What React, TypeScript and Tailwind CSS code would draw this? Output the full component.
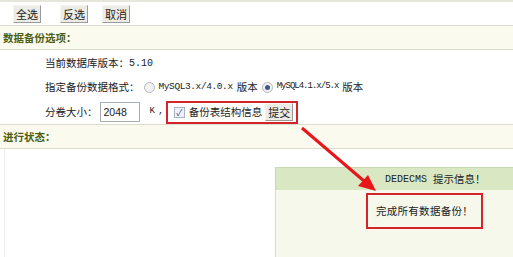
const FONT = { fontFamily: '"SimSun", "Noto Sans CJK SC", sans-serif' };
const MONO = { fontFamily: '"Liberation Mono", "Noto Sans CJK SC", monospace' };

function OldButton({ label }: { label: string }) {
  return (
    <button className="h-[18px] w-[28px] text-[11px] leading-[16px] text-[#222] bg-[#ecebe4] border border-t-[#f5f5f5] border-l-[#f5f5f5] border-r-[#9a9a9a] border-b-[#9a9a9a] whitespace-nowrap">
      {label}
    </button>
  );
}

function Radio({ checked }: { checked?: boolean }) {
  return (
    <span className="inline-flex w-[11px] h-[11px] rounded-full border border-[#b8b8b8] bg-[#f1f1f1] items-center justify-center">
      {checked && <span className="w-[5px] h-[5px] rounded-full bg-[#3d5a86]" />}
    </span>
  );
}

function SectionHeader({ title }: { title: string }) {
  return (
    <div className="h-[25px] bg-[#fafaef] border-y border-[#dcdccf] flex items-center pl-[3px]">
      <span className="text-[10.5px] font-bold text-[#4b5e12]">{title}</span>
    </div>
  );
}

export default function App() {
  return (
    <div className="relative w-[513px] h-[257px] overflow-hidden bg-white text-[10.5px] text-[#222] whitespace-nowrap" style={FONT}>
      {/* toolbar */}
      <div className="h-[25px] border-t-2 border-[#e6e6da] flex items-center pl-[13px]">
        <OldButton label="全选" />
        <span className="ml-[19px]"><OldButton label="反选" /></span>
        <span className="ml-[14px]"><OldButton label="取消" /></span>
      </div>

      <SectionHeader title="数据备份选项：" />

      <div className="pl-[45px]">
        <div className="h-[24px] flex items-center pt-[2px]">
          <span>当前数据库版本：</span>
          <span style={MONO} className="text-[10px]">5.10</span>
        </div>
        <div className="h-[26px] flex items-center">
          <span>指定备份数据格式：</span>
          <span className="ml-[4px] flex items-center">
            <Radio />
            <span style={MONO} className="ml-[4px] text-[9.5px] tracking-[-0.4px]">MySQL3.x/4.0.x</span>
            <span className="ml-[4px]">版本</span>
          </span>
          <span className="ml-[4px] flex items-center">
            <Radio checked />
            <span style={MONO} className="ml-[4px] text-[9px] tracking-[-1px]">MySQL4.1.x/5.x</span>
            <span className="ml-[4px]">版本</span>
          </span>
        </div>
        <div className="h-[24px] flex items-center">
          <span>分卷大小：</span>
          <input
            readOnly
            value="2048"
            className="ml-[2px] w-[40px] h-[20px] border border-[#a5acb2] px-[3px] text-[10.5px] outline-none"
            style={{ fontFamily: '"Liberation Sans", sans-serif' }}
          />
          <span className="ml-[10px] text-[9px] tracking-[-1px]" style={MONO}>K ,</span>
          <span className="ml-[3px] h-[23px] w-[132px] border-2 border-[#d3232b] flex items-center pl-[6px]">
            <span className="w-[11px] h-[11px] border border-[#a9b4c2] bg-[#eef2f7] flex items-center justify-center text-[9px] leading-none text-[#3a5b9c]">✓</span>
            <span className="ml-[4px]">备份表结构信息</span>
            <span className="ml-[3px] flex"><OldButton label="提交" /></span>
          </span>
        </div>
      </div>

      <SectionHeader title="进行状态：" />

      <div className="flex h-[110px]">
        <div className="w-[5px] border-r border-[#eeeeee]" />
        <div className="ml-[270px] mt-[18px] flex-1 flex flex-col">
          <div className="h-[23px] bg-[#d9e8c3] border-t border-l border-[#c9d9b3] flex items-center pl-[109px]">
            <span style={MONO} className="text-[10px]">DEDECMS</span>
            <span className="ml-[6px]">提示信息！</span>
          </div>
          <div className="flex-1 bg-[#f6f8ec] border-l border-[#d8dccb] pl-[90px] pt-[3px]">
            <div className="w-[117px] h-[36px] border-2 border-[#d3232b] flex items-center justify-center tracking-[0.3px]">
              完成所有数据备份！
            </div>
          </div>
        </div>
      </div>

      {/* arrow overlay */}
      <svg className="absolute left-0 top-0 pointer-events-none" width="513" height="257">
        <line x1="302" y1="128" x2="364" y2="181" stroke="#e8161b" strokeWidth="3" />
        <polygon points="376,191 358,186 368,175" fill="#e8161b" />
      </svg>
    </div>
  );
}
